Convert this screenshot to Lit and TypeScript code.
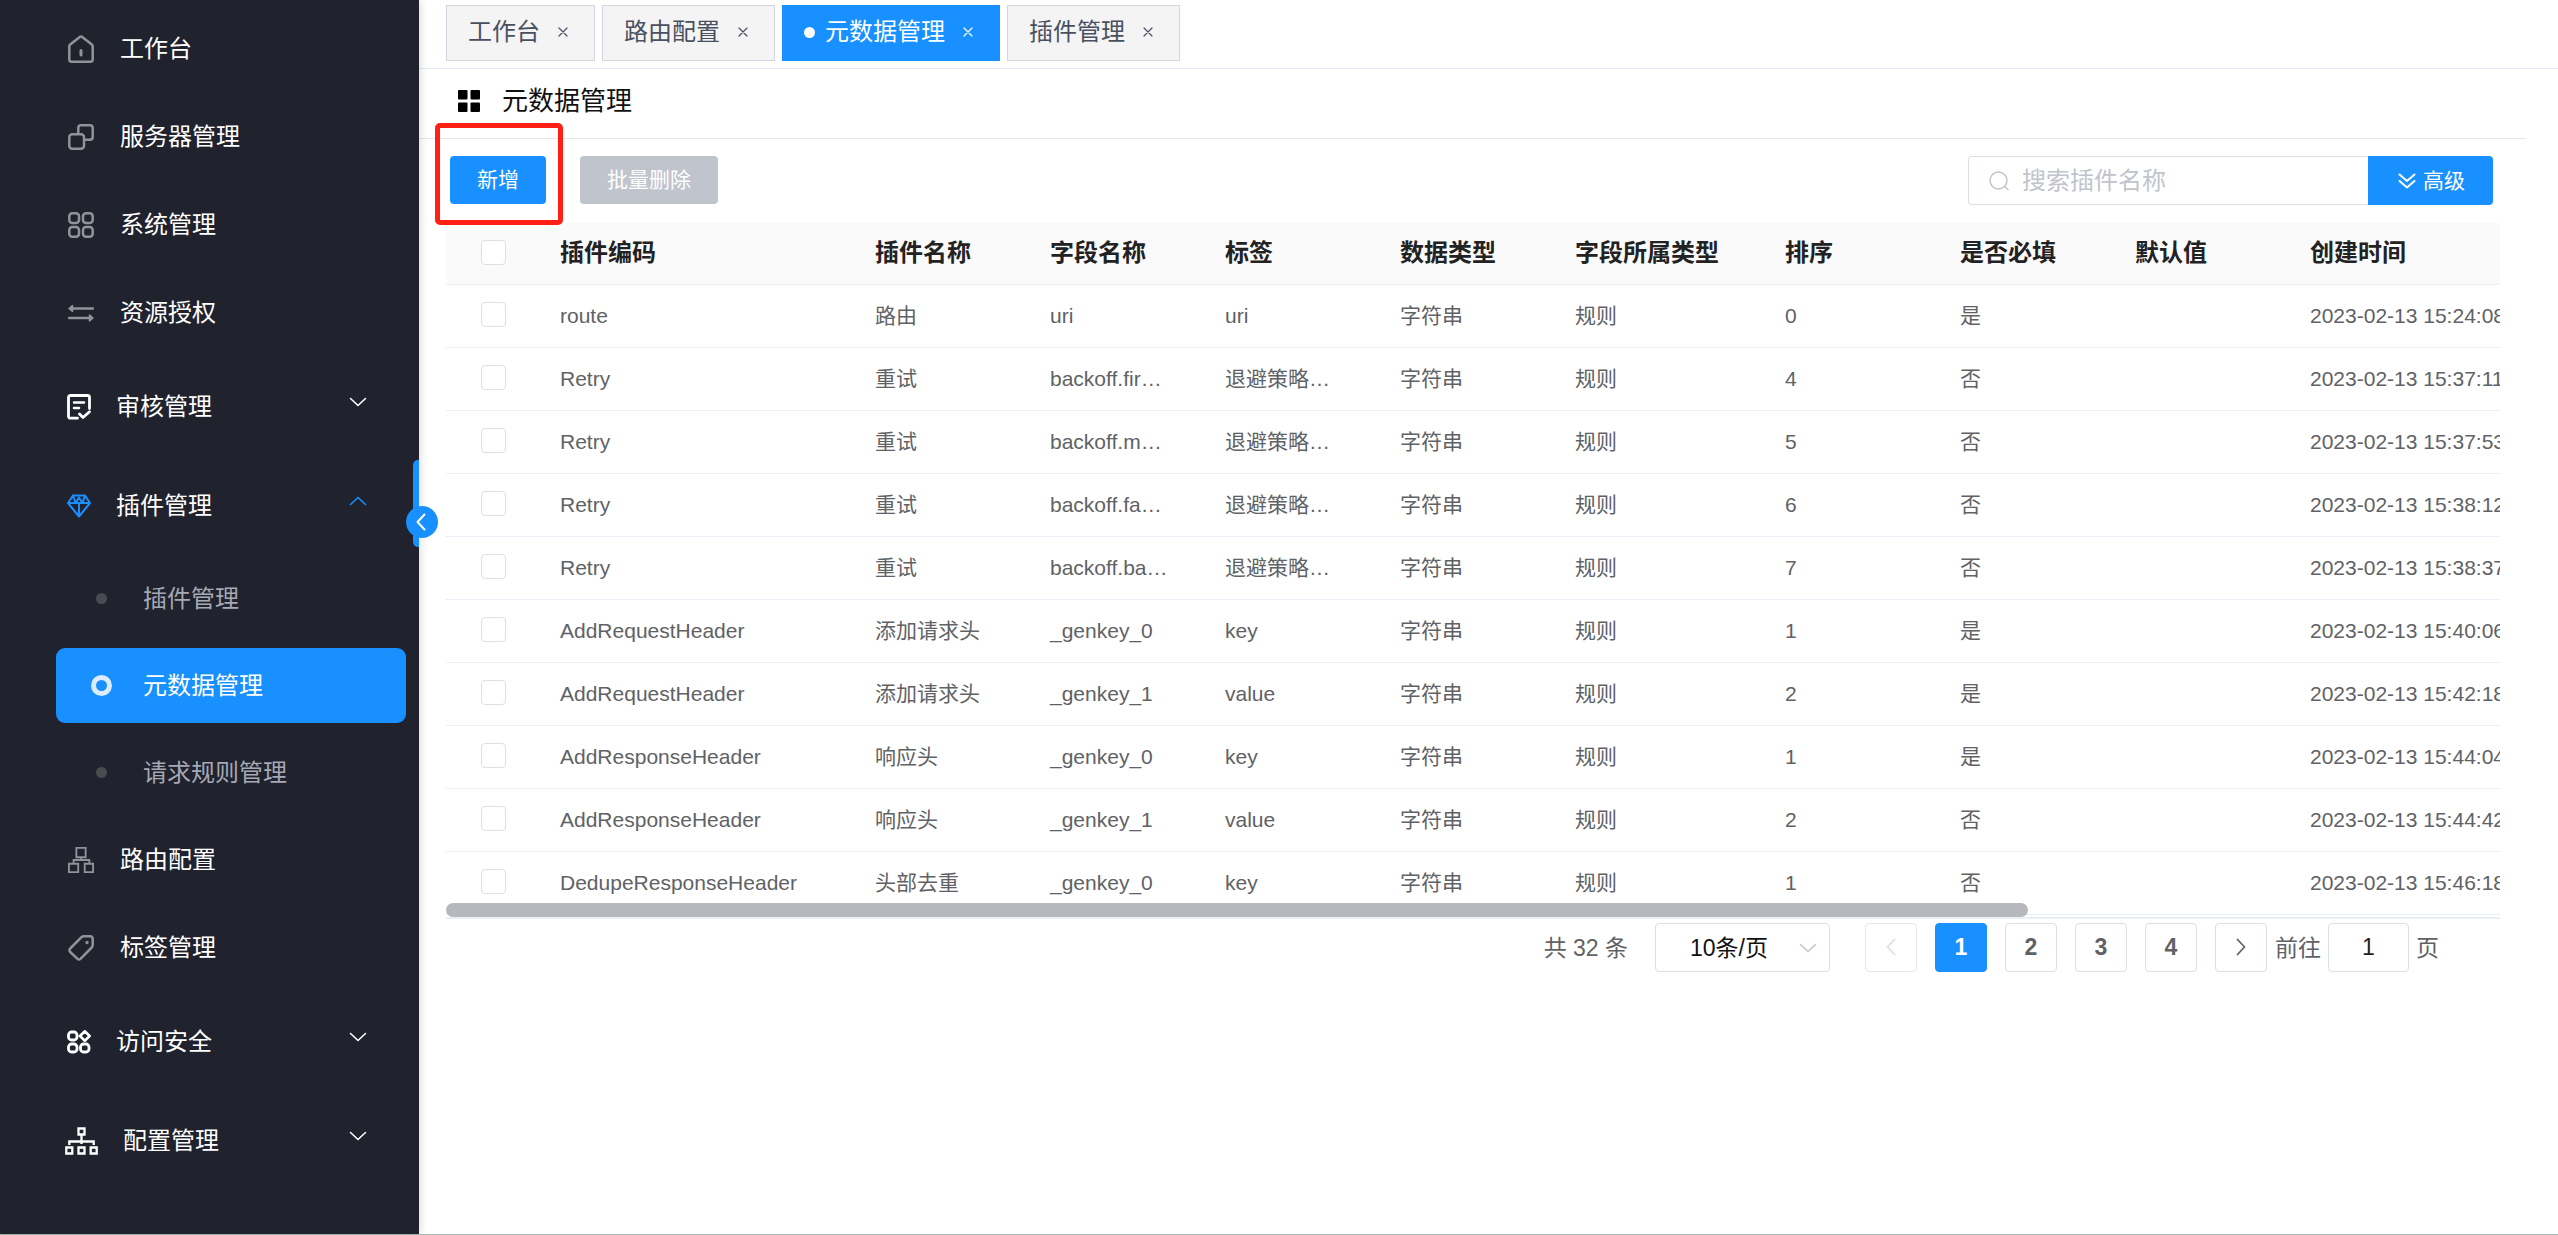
import { LitElement, html, css, svg, nothing } from "lit";
import { customElement, property, state } from "lit/decorators.js";
import { classMap } from "lit/directives/class-map.js";

const FONT = css`"Liberation Sans", "Noto Sans CJK SC", sans-serif`;

const ICONS: Record<string, { w: number; h: number; body: unknown }> = {
  home: {
    w: 26,
    h: 28,
    body: svg`<path d="M1.3 11.5 Q1.3 10.3 2.2 9.5 L11.8 1.9 Q13 1.100 14.2 1.900 L23.800 9.5 Q24.700 10.3 24.700 11.5 V24.5 Q24.700 26.700 22.5 26.700 H3.5 Q1.3 26.700 1.3 24.5 Z"/><path d="M13 15.5 V20" stroke-width="3"/>`,
  },
  server: {
    w: 26,
    h: 26,
    body: svg`<rect x="1.300" y="10.300" width="14.700" height="14.400" rx="3"/><path d="M10.300 9.5 V4 Q10.300 1.300 13 1.300 H22 Q24.700 1.300 24.700 4 V13 Q24.700 15.700 22 15.700 H16.5"/>`,
  },
  grid: {
    w: 26,
    h: 26,
    body: svg`<rect x="1.300" y="1.300" width="9.700" height="9.700" rx="3"/><rect x="15" y="1.300" width="9.700" height="9.700" rx="3"/><rect x="1.300" y="15" width="9.700" height="9.700" rx="3"/><rect x="15" y="15" width="9.700" height="9.700" rx="3"/>`,
  },
  swap: {
    w: 26,
    h: 18,
    body: svg`<path d="M3 4.500 H25 M1 14 H23"/><path d="M1 4.500 L4.500 1.500 V7.500 Z M25 14 L21.500 11 V17 Z" fill="currentColor" stroke-width="1.500"/>`,
  },
  audit: {
    w: 24,
    h: 26,
    body: svg`<path d="M10.5 24.2 H3.5 Q1.5 24.2 1.5 22.2 V3.5 Q1.5 1.5 3.5 1.5 H20.5 Q22.5 1.5 22.5 3.5 V14.5" stroke-width="2.800"/><path d="M7 8.5 H17 M7 14 H12" stroke-width="2.5"/><path d="M12.500 20 L16 23.5 L22.500 17.8" stroke-width="2.800"/>`,
  },
  gem: {
    w: 24,
    h: 24,
    body: svg`<path d="M6 1.5 H18 L23 9 L12 22.5 L1 9 Z M1 9 H23 M12 9 V22 M6 1.5 L8.5 9 M18 1.5 L15.5 9 M8.5 9 L12 3.5 L15.5 9" stroke-width="2"/>`,
  },
  route: {
    w: 28,
    h: 28,
    body: svg`<path d="M9 1 H19 V11 H9 Z M1 18 H11 V27 H1 Z M18 18 H27 V27 H18 Z M14 11 V14 M6 18 V14 H23 V18" stroke-width="2" stroke-linejoin="miter"/>`,
  },
  tag: {
    w: 26,
    h: 26,
    body: svg`<path d="M13.5 2.200 Q14.5 1.300 16 1.300 H22 Q24.700 1.300 24.700 4 V10 Q24.700 11.5 23.700 12.5 L12.5 23.800 Q11 25.200 9.5 23.800 L2.200 17 Q.8 15.300 2.200 13.500 Z"/><circle cx="19" cy="7.500" r="0.700" fill="currentColor" stroke-width="2"/>`,
  },
  apps: {
    w: 24,
    h: 24,
    body: svg`<rect x="1.5" y="2" width="8.500" height="8" rx="3" stroke-width="2.800"/><rect x="1.500" y="14" width="8.500" height="8" rx="3" stroke-width="2.800"/><rect x="13.500" y="14" width="8.500" height="8" rx="3" stroke-width="2.800"/><path d="M17.800 1.300 L22.600 6 L17.800 10.700 L13 6 Z" stroke-width="2.600"/>`,
  },
  tree: {
    w: 33,
    h: 28,
    body: svg`<path d="M13.500 1.500 H19.500 V7.500 H13.500 Z M1.300 20.500 H7.300 V26.500 H1.300 Z M13.500 20.500 H19.500 V26.500 H13.500 Z M25.700 20.500 H31.700 V26.500 H25.700 Z M16.500 8 V17 M4.300 18 V14.500 H28.700 V18" stroke-width="2.300" stroke-linejoin="miter" stroke-linecap="butt"/>`,
  },
  chevron: { w: 18, h: 10, body: svg`<path d="M1.500 1.500 L9 8.500 L16.500 1.500"/>` },
  left: { w: 10, h: 18, body: svg`<path d="M8.500 1.500 L1.500 9 L8.500 16.500"/>` },
  right: { w: 10, h: 18, body: svg`<path d="M1.500 1.500 L8.500 9 L1.500 16.500"/>` },
  close: { w: 10, h: 10, body: svg`<path d="M1 1 L9 9 M9 1 L1 9" stroke-width="1.200"/>` },
  search: {
    w: 20,
    h: 20,
    body: svg`<circle cx="9.500" cy="9.500" r="8.500" stroke-width="1.500"/><path d="M15.500 15.500 L19 18.500" stroke-width="1.500"/>`,
  },
  double: {
    w: 18,
    h: 16,
    body: svg`<path d="M1.500 1.500 L9 8 L16.500 1.500 M1.500 8 L9 14.500 L16.500 8"/>`,
  },
  tiles: {
    w: 22,
    h: 22,
    body: svg`<g fill="currentColor" stroke="none"><rect width="9.500" height="9.500" rx="1"/><rect x="12.500" width="9.500" height="9.500" rx="1"/><rect y="12.500" width="9.500" height="9.500" rx="1"/><rect x="12.500" y="12.500" width="9.500" height="9.500" rx="1"/></g>`,
  },
};

function icon(name: string) {
  const i = ICONS[name];
  return html`<svg
    width=${i.w}
    height=${i.h}
    viewBox="0 0 ${i.w} ${i.h}"
    fill="none"
    stroke="currentColor"
    stroke-width="2"
    stroke-linecap="round"
    stroke-linejoin="round"
    aria-hidden="true"
  >
    ${i.body}
  </svg>`;
}

interface MenuItem {
  label: string;
  icon: string;
  group?: boolean;
  children?: string[];
}

const MENU: MenuItem[] = [
  { label: "工作台", icon: "home" },
  { label: "服务器管理", icon: "server" },
  { label: "系统管理", icon: "grid" },
  { label: "资源授权", icon: "swap" },
  { label: "审核管理", icon: "audit", group: true },
  {
    label: "插件管理",
    icon: "gem",
    group: true,
    children: ["插件管理", "元数据管理", "请求规则管理"],
  },
  { label: "路由配置", icon: "route" },
  { label: "标签管理", icon: "tag" },
  { label: "访问安全", icon: "apps", group: true },
  { label: "配置管理", icon: "tree", group: true },
];

@customElement("side-menu")
export class SideMenu extends LitElement {
  @property() current = "";

  static styles = css`
    :host {
      display: block;
      position: relative;
      flex: none;
      width: 419px;
      box-sizing: border-box;
      padding-top: 5px;
      background: #20222d;
      color: #fff;
      font: 24px/32px ${FONT};
      box-shadow: 0 0 9px rgba(0, 21, 41, 0.2);
    }
    svg {
      display: block;
    }
    ul {
      margin: 0;
      padding: 0;
      list-style: none;
    }
    .item {
      display: flex;
      align-items: center;
      gap: 26px;
      width: 100%;
      height: 88px;
      box-sizing: border-box;
      padding: 0 52px 0 68px;
      border: 0;
      background: none;
      color: inherit;
      font: inherit;
      text-align: left;
      text-decoration: none;
    }
    .icon {
      color: #909399;
      display: flex;
      justify-content: center;
      width: 26px;
    }
    .icon svg {
      stroke-width: 2.5px;
    }
    .group {
      height: 99px;
      gap: 25px;
      padding-left: 67px;
    }
    .group .icon {
      width: auto;
      min-width: 24px;
      color: #fff;
    }
    .icon.broad {
      margin-left: -2px;
    }
    .group.open .icon,
    .group.open .arrow {
      color: #1890ff;
    }
    .arrow {
      margin-left: auto;
      padding-bottom: 10px;
    }
    .arrow svg {
      stroke-width: 1.6px;
    }
    .open .arrow svg {
      transform: rotate(180deg);
    }
    .subs {
      display: flex;
      flex-direction: column;
      gap: 12px;
      padding: 6px 13px 6px 56px;
    }
    .sub {
      display: flex;
      align-items: center;
      gap: 31px;
      height: 75px;
      padding-left: 35px;
      border-radius: 9px;
      color: #a6a8b4;
      text-decoration: none;
    }
    .sub.active {
      background: #1890ff;
      color: #fff;
    }
    .mark {
      display: flex;
      justify-content: center;
      width: 21px;
    }
    .mark::before {
      content: "";
      width: 11px;
      height: 11px;
      border-radius: 50%;
      background: #4a4b50;
    }
    .active .mark::before {
      border: 5px solid #dcecfb;
      background: #1890ff;
    }
    .rail {
      position: absolute;
      right: 0;
      top: 460px;
      width: 6px;
      height: 87px;
      border-radius: 5px 0 0 5px;
      background: #1890ff;
    }
    .fold {
      position: absolute;
      z-index: 2;
      right: -19px;
      top: 506px;
      display: flex;
      align-items: center;
      justify-content: center;
      width: 32px;
      height: 32px;
      padding: 0 2px 0 0;
      border: 0;
      border-radius: 50%;
      background: #1890ff;
      color: #fff;
    }
  `;

  render() {
    return html`
      <nav aria-label="主菜单">
        <ul>
          ${MENU.map(
            (m) => html`<li>
              ${m.group
                ? html`<button class=${classMap({ item: true, group: true, open: !!m.children })}>
                    <span class=${classMap({ icon: true, broad: m.icon === "tree" })}>${icon(m.icon)}</span>${m.label}
                    <span class="arrow">${icon("chevron")}</span>
                  </button>`
                : html`<a class="item" href="#"><span class="icon">${icon(m.icon)}</span>${m.label}</a>`}
              ${m.children
                ? html`<ul class="subs">
                    ${m.children.map(
                      (c) => html`<li>
                        <a class=${classMap({ sub: true, active: c === this.current })} href="#">
                          <span class="mark"></span>${c}
                        </a>
                      </li>`
                    )}
                  </ul>`
                : nothing}
            </li>`
          )}
        </ul>
      </nav>
      <div class="rail"></div>
      <button class="fold" aria-label="收起菜单">${icon("left")}</button>
    `;
  }
}

@customElement("page-tabs")
export class PageTabs extends LitElement {
  @property() current = "";

  static styles = css`
    :host {
      display: flex;
      gap: 7px;
      padding: 5px 27px 7px;
      border-bottom: 1px solid #e6e9f5;
      font: 24px/32px ${FONT};
    }
    .tab {
      display: flex;
      align-items: center;
      height: 56px;
      box-sizing: border-box;
      padding: 0 21px 2px;
      border: 1px solid #d3d6e0;
      background: #f4f4f5;
      color: #495060;
    }
    .tab a {
      color: inherit;
      text-decoration: none;
    }
    .active {
      border-color: #1890ff;
      background: #1890ff;
      color: #fff;
    }
    .active::before {
      content: "";
      width: 11px;
      height: 11px;
      margin-right: 10px;
      border-radius: 50%;
      background: #fff;
    }
    button {
      display: flex;
      justify-content: center;
      width: 21px;
      margin-left: 12px;
      padding: 0;
      border: 0;
      background: none;
      color: inherit;
    }
  `;

  render() {
    return ["工作台", "路由配置", "元数据管理", "插件管理"].map(
      (t) => html`<div class=${classMap({ tab: true, active: t === this.current })}>
        <a href="#">${t}</a>
        <button aria-label="关闭${t}">${icon("close")}</button>
      </div>`
    );
  }
}

const COLUMNS: [string, string][] = [
  ["插件编码", "wide"],
  ["插件名称", "std"],
  ["字段名称", "std"],
  ["标签", "std"],
  ["数据类型", "std"],
  ["字段所属类型", "mid"],
  ["排序", "std"],
  ["是否必填", "std"],
  ["默认值", "std"],
  ["创建时间", "rest"],
];

const ROWS: string[][] = [
  ["route", "路由", "uri", "uri", "0", "是", "15:24:08"],
  ["Retry", "重试", "backoff.fir…", "退避策略…", "4", "否", "15:37:11"],
  ["Retry", "重试", "backoff.m…", "退避策略…", "5", "否", "15:37:53"],
  ["Retry", "重试", "backoff.fa…", "退避策略…", "6", "否", "15:38:12"],
  ["Retry", "重试", "backoff.ba…", "退避策略…", "7", "否", "15:38:37"],
  ["AddRequestHeader", "添加请求头", "_genkey_0", "key", "1", "是", "15:40:06"],
  ["AddRequestHeader", "添加请求头", "_genkey_1", "value", "2", "是", "15:42:18"],
  ["AddResponseHeader", "响应头", "_genkey_0", "key", "1", "是", "15:44:04"],
  ["AddResponseHeader", "响应头", "_genkey_1", "value", "2", "否", "15:44:42"],
  ["DedupeResponseHeader", "头部去重", "_genkey_0", "key", "1", "否", "15:46:18"],
];

@customElement("meta-table")
export class MetaTable extends LitElement {
  static styles = css`
    :host {
      display: block;
      position: relative;
      overflow: hidden;
      padding-bottom: 2px;
      border-bottom: 2px solid #ebeef5;
      font: 21px/30px ${FONT};
      color: #606266;
    }
    table {
      width: 130%;
      table-layout: fixed;
      border-collapse: separate;
      border-spacing: 0;
    }
    .check {
      width: 96px;
    }
    .wide {
      width: 315px;
    }
    .std {
      width: 175px;
    }
    .mid {
      width: 210px;
    }
    th,
    td {
      box-sizing: border-box;
      height: 63px;
      padding: 0 18px;
      border-bottom: 1px solid #ebeef5;
      text-align: left;
      font-weight: 400;
      white-space: nowrap;
    }
    th {
      height: 62px;
      padding-bottom: 2px;
      background: #fafafa;
      color: #222;
      font-size: 24px;
      font-weight: 700;
    }
    .pick {
      padding: 0 0 3px 35px;
    }
    input {
      display: block;
      appearance: none;
      width: 25px;
      height: 25px;
      margin: 0;
      border: 1px solid #dcdfe6;
      border-radius: 4px;
      background: #fff;
    }
    .bar {
      position: absolute;
      left: 0;
      bottom: 0;
      width: 77%;
      height: 14px;
      border-radius: 7px;
      background: #b7b8be;
    }
  `;

  render() {
    return html`
      <table>
        <colgroup>
          <col class="check" />
          ${COLUMNS.map(([, c]) => html`<col class=${c} />`)}
        </colgroup>
        <thead>
          <tr>
            <th class="pick"><input type="checkbox" aria-label="全选" /></th>
            ${COLUMNS.map(([t]) => html`<th scope="col">${t}</th>`)}
          </tr>
        </thead>
        <tbody>
          ${ROWS.map(
            ([code, name, field, label, order, required, time]) => html`<tr>
              <td class="pick"><input type="checkbox" aria-label="选择 ${code}" /></td>
              <td>${code}</td>
              <td>${name}</td>
              <td>${field}</td>
              <td>${label}</td>
              <td>字符串</td>
              <td>规则</td>
              <td>${order}</td>
              <td>${required}</td>
              <td></td>
              <td>2023-02-13 ${time}</td>
            </tr>`
          )}
        </tbody>
      </table>
      <div class="bar"></div>
    `;
  }
}

@customElement("page-nav")
export class PageNav extends LitElement {
  @state() private page = 1;

  static styles = css`
    :host {
      display: flex;
      justify-content: flex-end;
      align-items: center;
      padding: 4px 61px 0 0;
      font: 23px/32px ${FONT};
      color: #606266;
    }
    .size {
      position: relative;
      display: flex;
      align-items: center;
      margin: 0 35px 0 27px;
    }
    .size svg {
      position: absolute;
      right: 13px;
      color: #c0c4cc;
      stroke-width: 1.5px;
      pointer-events: none;
    }
    select,
    .goto,
    .pages button {
      height: 49px;
      box-sizing: border-box;
      margin: 0;
      border: 1px solid #dcdfe6;
      border-radius: 4px;
      background: #fff;
      color: #222;
      font: inherit;
    }
    select {
      appearance: none;
      width: 175px;
      padding: 0 0 0 34px;
      color: #111;
    }
    .pages {
      display: flex;
      gap: 18px;
    }
    .pages button {
      display: flex;
      align-items: center;
      justify-content: center;
      width: 52px;
      padding: 0 0 2px;
      color: #606266;
      font-weight: 700;
    }
    .pages svg {
      stroke-width: 1.8px;
    }
    .pages button:disabled {
      border-color: #e6e8f0;
      color: #dcdfe9;
    }
    .pages .active {
      border-color: #1890ff;
      background: #1890ff;
      color: #fff;
    }
    .jump {
      display: flex;
      align-items: center;
      gap: 7px;
      margin-left: 8px;
    }
    .goto {
      width: 81px;
      padding: 0;
      text-align: center;
    }
  `;

  render() {
    return html`
      <span>共 32 条</span>
      <div class="size">
        <select aria-label="每页条数">
          <option>10条/页</option>
        </select>
        ${icon("chevron")}
      </div>
      <div class="pages">
        <button aria-label="上一页" ?disabled=${this.page === 1}>${icon("left")}</button>
        ${[1, 2, 3, 4].map(
          (n) => html`<button class=${classMap({ active: n === this.page })} @click=${() => (this.page = n)}>${n}</button>`
        )}
        <button aria-label="下一页">${icon("right")}</button>
      </div>
      <div class="jump">
        <label for="goto">前往</label>
        <input id="goto" class="goto" .value=${String(this.page)} />
        <span>页</span>
      </div>
    `;
  }
}

@customElement("app-root")
export class AppRoot extends LitElement {
  static styles = css`
    :host {
      display: flex;
      min-height: 100vh;
      box-sizing: border-box;
      border-bottom: 1px solid #a5c2b3;
      background: #fff;
      font: 24px/32px ${FONT};
    }
    svg {
      display: block;
    }
    main {
      flex: 1;
      min-width: 0;
    }
    .title {
      display: flex;
      align-items: center;
      gap: 22px;
      height: 70px;
      box-sizing: border-box;
      margin-right: 32px;
      padding: 0 0 6px 39px;
      border-bottom: 1px solid #e4e6eb;
    }
    h1 {
      margin: 0;
      font-size: 26px;
      font-weight: 400;
      color: #111;
    }
    .content {
      padding: 0 58px 0 27px;
    }
    .toolbar {
      display: flex;
      align-items: flex-start;
      gap: 34px;
      padding: 17px 7px 18px 4px;
    }
    .btn {
      height: 48px;
      padding: 0 27px;
      border: 0;
      border-radius: 4px;
      background: #1890ff;
      color: #fff;
      font: 21px/30px ${FONT};
    }
    .btn:disabled {
      background: #bfc4cd;
    }
    .spot {
      position: relative;
      z-index: 1;
      display: flex;
    }
    .spot::after {
      content: "";
      position: absolute;
      left: -15px;
      right: -17px;
      top: -33px;
      bottom: -21px;
      border: 5px solid #ff1f14;
      border-radius: 5px;
      pointer-events: none;
    }
    .search {
      display: flex;
      margin-left: auto;
    }
    .field {
      display: flex;
      align-items: center;
      gap: 13px;
      width: 400px;
      height: 49px;
      box-sizing: border-box;
      padding: 0 13px 0 20px;
      border: 1px solid #dcdfe6;
      border-right: 0;
      border-radius: 4px 0 0 4px;
      color: #c0c4cc;
    }
    .field input {
      flex: 1;
      min-width: 0;
      padding: 0;
      border: 0;
      outline: 0;
      background: none;
      font: inherit;
    }
    .field input::placeholder {
      color: #c0c4cc;
    }
    .more {
      display: flex;
      align-items: center;
      gap: 7px;
      height: 49px;
      padding: 0 28px 0 30px;
      border-radius: 0 4px 4px 0;
    }
  `;

  render() {
    return html`
      <side-menu current="元数据管理"></side-menu>
      <main>
        <page-tabs current="元数据管理"></page-tabs>
        <header class="title">${icon("tiles")}<h1>元数据管理</h1></header>
        <section class="content">
          <div class="toolbar">
            <span class="spot"><button class="btn">新增</button></span>
            <button class="btn" disabled>批量删除</button>
            <div class="search">
              <label class="field">
                ${icon("search")}
                <input type="text" placeholder="搜索插件名称" aria-label="搜索插件名称" />
              </label>
              <button class="btn more">${icon("double")}高级</button>
            </div>
          </div>
          <meta-table></meta-table>
          <page-nav></page-nav>
        </section>
      </main>
    `;
  }
}
